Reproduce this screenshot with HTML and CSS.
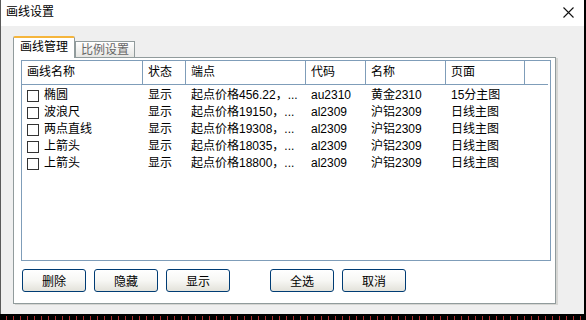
FILE: index.html
```html
<!DOCTYPE html>
<html lang="zh">
<head>
  <meta charset="UTF-8" />
  <title>画线设置</title>
  <link rel="stylesheet" href="styles.css">
</head>
<body>

  <div class="dialog">
    <div class="titlebar">
      <span class="title">画线设置</span>
      <span class="close">
        <svg width="11" height="11" viewBox="0 0 11 11"><path d="M0.5 0.5 L10.5 10.5 M10.5 0.5 L0.5 10.5" stroke="#111" stroke-width="1.1"/></svg>
      </span>
    </div>

    <div class="dialog-body">
      <div class="tabs">
        <div class="tab active">画线管理</div>
        <div class="tab">比例设置</div>
      </div>

      <div class="tab-panel">
        <div class="list">
          <div class="list-head">
            <div class="col">画线名称</div>
            <div class="col">状态</div>
            <div class="col">端点</div>
            <div class="col">代码</div>
            <div class="col">名称</div>
            <div class="col">页面</div>
            <div class="col"></div>
          </div>

          <div class="rows">
            <div class="row">
              <div class="cell name"><span class="check"></span>椭圆</div>
              <div class="cell">显示</div>
              <div class="cell">起点价格456.22，...</div>
              <div class="cell">au2310</div>
              <div class="cell">黄金2310</div>
              <div class="cell">15分主图</div>
            </div>
            <div class="row">
              <div class="cell name"><span class="check"></span>波浪尺</div>
              <div class="cell">显示</div>
              <div class="cell">起点价格19150，...</div>
              <div class="cell">al2309</div>
              <div class="cell">沪铝2309</div>
              <div class="cell">日线主图</div>
            </div>
            <div class="row">
              <div class="cell name"><span class="check"></span>两点直线</div>
              <div class="cell">显示</div>
              <div class="cell">起点价格19308，...</div>
              <div class="cell">al2309</div>
              <div class="cell">沪铝2309</div>
              <div class="cell">日线主图</div>
            </div>
            <div class="row">
              <div class="cell name"><span class="check"></span>上箭头</div>
              <div class="cell">显示</div>
              <div class="cell">起点价格18035，...</div>
              <div class="cell">al2309</div>
              <div class="cell">沪铝2309</div>
              <div class="cell">日线主图</div>
            </div>
            <div class="row">
              <div class="cell name"><span class="check"></span>上箭头</div>
              <div class="cell">显示</div>
              <div class="cell">起点价格18800，...</div>
              <div class="cell">al2309</div>
              <div class="cell">沪铝2309</div>
              <div class="cell">日线主图</div>
            </div>
          </div>
        </div>

        <div class="buttons">
          <div class="btn-group">
            <button class="btn">删除</button>
            <button class="btn">隐藏</button>
            <button class="btn">显示</button>
          </div>
          <div class="btn-group">
            <button class="btn">全选</button>
            <button class="btn">取消</button>
          </div>
        </div>
      </div>
    </div>
  </div>

  <div class="chart-strip"></div>

</body>
</html>
```

FILE: styles.css
```css
body {
  margin: 0;
  background-color: #000;
  font-family: "Liberation Sans", "Noto Sans CJK SC", sans-serif;
  font-size: 12px;
  color: #000;
  width: 586px;
  height: 320px;
  overflow: hidden;
}

.dialog {
  width: 584px;
  height: 314px;
  background-color: #efefef;
  box-sizing: border-box;
  border-left: 1px solid #5a5a5a;
}

.titlebar {
  height: 26px;
  background-color: #fff;
  display: flex;
  align-items: center;
  justify-content: space-between;
  padding: 0 10px 0 5px;
}

.title {
  font-size: 12px;
  line-height: 14px;
  margin-top: -2px;
}

.close {
  display: flex;
  margin-top: -2px;
}

.dialog-body {
  padding: 10px 0 0 12px;
}

/* tabs */
.tabs {
  display: flex;
  align-items: flex-end;
  height: 21px;
}

.tab {
  height: 16px;
  line-height: 16px;
  padding: 0 5px;
  border: 1px solid #919b9c;
  border-bottom: none;
  background: linear-gradient(#fff, #e6e6e3);
  color: #666;
  box-sizing: border-box;
  width: 60px;
  text-align: center;
}

.tab.active {
  height: 22px;
  line-height: 19px;
  width: 62px;
  background: #fff;
  color: #000;
  border-top: 2px solid #f5b53c;
  border-radius: 2px 2px 0 0;
  margin-bottom: -1px;
  position: relative;
  z-index: 1;
}

.tab-panel {
  width: 543px;
  height: 247px;
  box-sizing: border-box;
  background-color: #fff;
  border: 1px solid #919b9c;
  box-shadow: 2px 1px 0 #d6d6d3;
  padding: 2px 0 0 7px;
}

/* list */
.list {
  width: 530px;
  height: 201px;
  box-sizing: border-box;
  border: 1px solid #7f9db9;
}

.list-head,
.row {
  display: grid;
  grid-template-columns: 121px 43px 120px 60px 80px 79px 26px;
}

.list-head {
  height: 24px;
  border-bottom: 1px solid #7f9db9;
  box-sizing: border-box;
  margin-right: 2px;
}

.list-head .col {
  border-right: 1px solid #7f9db9;
  padding-left: 5px;
  line-height: 22px;
}

.rows {
  padding-top: 2px;
}

.row {
  height: 17px;
  line-height: 17px;
}

.cell {
  padding-left: 5px;
  white-space: nowrap;
}

.cell.name {
  display: flex;
  align-items: center;
  gap: 5px;
}

.check {
  width: 12px;
  height: 12px;
  box-sizing: border-box;
  border: 1px solid #333;
  background: #fff;
}

/* buttons */
.buttons {
  display: flex;
  gap: 40px;
  margin-top: 8px;
  padding-left: 1px;
}

.btn-group {
  display: flex;
  gap: 8px;
}

.btn {
  width: 64px;
  height: 23px;
  border: 1px solid #003c74;
  border-radius: 3px;
  background: linear-gradient(#fff 0%, #f7f7f4 50%, #e3e2da 100%);
  font-family: "Liberation Sans", "Noto Sans CJK SC", sans-serif;
  font-size: 12px;
  color: #000;
  padding: 0;
  cursor: pointer;
}

.chart-strip {
  height: 6px;
  background-image: repeating-linear-gradient(90deg, transparent 0 6px, #b03030 6px 7px);
  background-size: 100% 4px;
  background-position: bottom;
  background-repeat: no-repeat;
}
```
